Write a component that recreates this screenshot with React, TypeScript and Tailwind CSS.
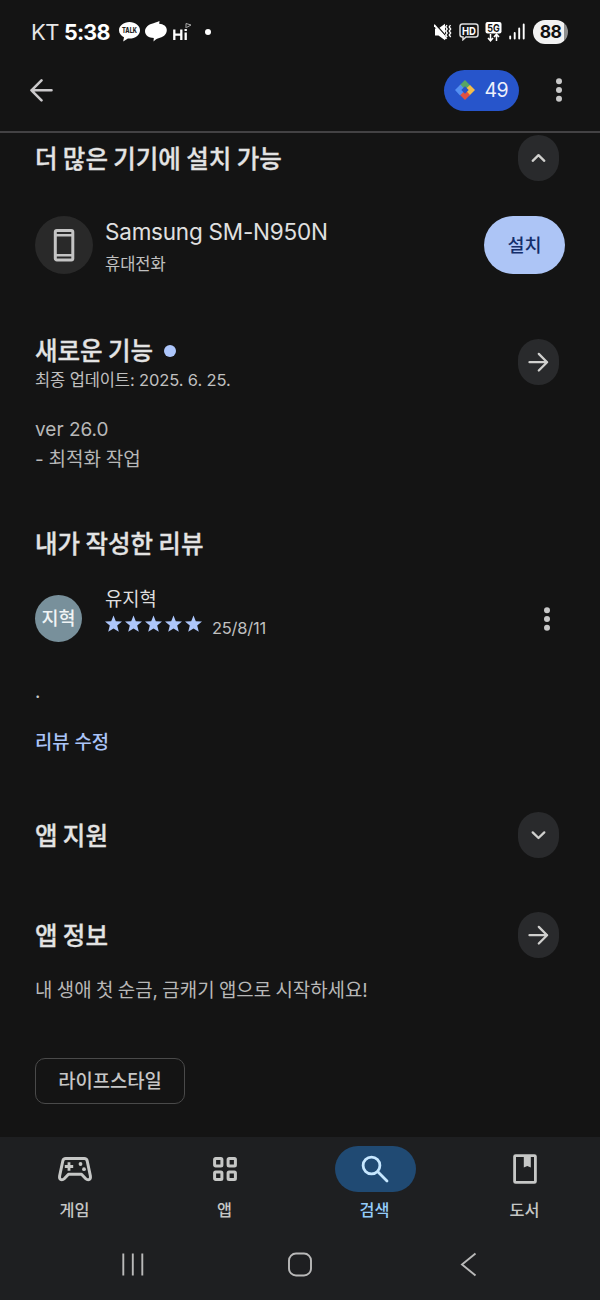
import type { ReactNode } from "react"

function StatusBar() {
  return (
    <div className="flex h-[62px] items-center justify-between pl-[31px] pr-[32px] pt-px text-white">
      <div className="flex items-center">
        <span className="w-[33px] text-[22px] leading-7 tracking-[-0.5px] text-[#e6e6e6]">KT</span>
        <span className="w-[55px] text-[21.5px] font-bold leading-7 tracking-[-0.8px]">5:38</span>
        <svg width="21" height="20" viewBox="0 0 21 20">
          <path d="M10.5 0C4.700 0 0 3.700 0 8.300c0 3 2 5.600 5 7L4.200 19.500l4.700-3 1.600.1C16.300 16.600 21 12.900 21 8.300S16.300 0 10.500 0z" fill="#fff" />
          <text x="10.5" y="10.800" textAnchor="middle" fontSize="7" fontWeight="800" textLength="15" lengthAdjust="spacingAndGlyphs" fill="#222">TALK</text>
        </svg>
        <svg className="ml-[5px]" width="22" height="21" viewBox="0 0 22 21">
          <path d="M8.500 2.200C11.500 1.200 13 .8 14.500 0l-.3 2.700c4.300.3 7.600 2.600 7.600 6.300 0 4.800-4.300 7.600-8.300 8.200-2 .6-3.500 1.800-5 3.200l.3-3.400C4 16.800 0 14.600 0 10.300c0-4.300 4-7.200 8.500-8.100z" fill="#fff" />
        </svg>
        <svg className="ml-[6px]" width="20" height="20" viewBox="0 0 20 20">
          <path d="M1.300 7.500v10.500M8.300 7.500v10.500M1.300 12.600h7M12.700 10.500v7.500M12.700 7v2" fill="none" stroke="#fff" strokeWidth="2.300" />
          <path d="M13 6V1.500l5 1.500-4.500 2.500" fill="none" stroke="#aaa" strokeWidth="1" />
        </svg>
        <span className="ml-[12px] size-[6px] rounded-full bg-white" />
      </div>
      <div className="flex items-center">
        <svg width="18" height="18" viewBox="0 0 18 18">
          <path d="M1 5.500h3.500L11 .8v16.400l-6.500-4.700H1z" fill="#fff" />
          <path d="M1 .8 13 14.300" stroke="#141414" strokeWidth="1.300" />
          <path d="M0 1.800 12.500 15.800" stroke="#fff" strokeWidth="2" />
          <path d="m13 2 -1.300 2 1.500 2-1.500 2 1.500 2-1.500 2 1.500 2M16.500 2l-1.300 2 1.500 2-1.500 2 1.500 2-1.500 2 1.500 2" fill="none" stroke="#fff" strokeWidth="1.300" />
        </svg>
        <svg className="ml-[7px]" width="20" height="18" viewBox="0 0 20 18">
          <path d="M3.500 1h13Q19 1 19 3.500v8q0 2.500-2.500 2.500H7l-3 2.700V14h-.5Q1 14 1 11.500v-8Q1 1 3.500 1z" fill="none" stroke="#ddd" strokeWidth="1.500" />
          <text x="10" y="11.600" textAnchor="middle" fontSize="11" fontWeight="700" textLength="14" lengthAdjust="spacingAndGlyphs" fill="#fff">HD</text>
        </svg>
        <svg className="ml-[6px]" width="17" height="20" viewBox="0 0 17 20">
          <rect x=".5" y="0" width="16" height="11.500" rx="2" fill="#fff" />
          <text x="8.500" y="9.500" textAnchor="middle" fontSize="10.500" fontWeight="700" textLength="12.500" lengthAdjust="spacingAndGlyphs" fill="#141414">5G</text>
          <path d="M5.500 12v6.500M3 16l2.500 2.800L8 16M11.500 19v-6.500M9 15l2.500-2.800L14 15" fill="none" stroke="#fff" strokeWidth="1.500" />
        </svg>
        <svg className="ml-[7px]" width="16" height="17" viewBox="0 0 16 17">
          <path d="M1.200 13.500V15.500M5.700 10v5.500M10.200 5.500v10M14.700 1.500v14" fill="none" stroke="#fff" strokeWidth="1.900" strokeLinecap="round" />
        </svg>
        <span className="ml-[8px] flex h-[24px] w-[35px] items-center justify-center rounded-full bg-linear-to-r from-[#f2f2f2] from-88% to-[#909090] to-88% text-[17.500px] font-bold leading-6 tracking-[-0.6px] text-[#111]">
          88
        </span>
      </div>
    </div>
  )
}

function DotsIcon() {
  return (
    <svg width="8" height="24" viewBox="0 0 8 24" fill="#c8c8c8">
      <circle cx="4" cy="3.200" r="3" />
      <circle cx="4" cy="12" r="3" />
      <circle cx="4" cy="20.800" r="3" />
    </svg>
  )
}

function PointsIcon() {
  return (
    <svg width="20" height="22" viewBox="0 0 20 22">
      <path d="M10 1 15.500 6.700 10 11.500 4.500 6.500z" fill="#57a564" />
      <path d="M15 6 20 11l-5.500 5.500L9.500 11z" fill="#f4bd49" />
      <path d="M10 21 4.500 15.500 10 10.500l5 5.500z" fill="#e2513f" />
      <path d="M0 11 5.500 5.500 10.500 11 5 16.500z" fill="#5490f3" />
      <path d="M10 7.300 13.700 11 10 14.700 6.300 11z" fill="#2853c7" />
    </svg>
  )
}

function AppBar() {
  return (
    <header className="flex h-[71px] items-center border-b-2 border-[#434244] pb-[13px] pl-[29px] pr-[37px]">
      <svg width="24" height="24" viewBox="0 0 24 24" fill="none" stroke="#cbc9cb" strokeWidth="2.600" strokeLinecap="round" strokeLinejoin="round">
        <path d="M22.500 12.300H2.500M12.500 2.300l-10 10 10 10" />
      </svg>
      <div className="ml-auto flex h-[41px] w-[75px] items-center rounded-full bg-[#2755cb] pl-[10.500px]">
        <PointsIcon />
        <span className="ml-[10px] text-[19.500px] leading-6 tracking-[-0.5px] text-[#eef1fb]">49</span>
      </div>
      <div className="ml-[36px]">
        <DotsIcon />
      </div>
    </header>
  )
}

function RoundButton({ icon }: { icon: "up" | "down" | "right" }) {
  return (
    <button className="flex h-[46px] w-[41px] shrink-0 items-center justify-center rounded-full bg-[#292a2c]">
      <svg width="22" height="22" viewBox="0 0 22 22" fill="none" stroke="#d0d0ce" strokeWidth="2.300" strokeLinecap="round" strokeLinejoin="round">
        {icon === "up" && <path d="M4.700 13.800 10.500 8.200l5.800 5.600" />}
        {icon === "down" && <path d="M4.700 8.400 10.500 14l5.800-5.600" />}
        {icon === "right" && <path d="M1.500 11.200h17.600M10.800 2.900l8.300 8.300-8.300 8.300" />}
      </svg>
    </button>
  )
}

function Heading({ children }: { children: ReactNode }) {
  return (
    <h2 className="pt-px text-[24.500px] font-medium leading-[30px] text-[#e3e3e3] [-webkit-text-stroke:0.3px_#e3e3e3] [word-spacing:-1.200px]">
      {children}
    </h2>
  )
}

function Stars() {
  return (
    <div className="flex gap-[2px] pb-[7px]">
      {[0, 1, 2, 3, 4].map((i) => (
        <svg key={i} width="18" height="18" viewBox="0 0 18 18">
          <path d="M8.500 .5l2.300 5.700 6.200.4-4.800 4 1.600 6.200L8.500 13.500l-5.300 3.300 1.600-6.200L0 6.600l6.200-.4z" fill="#adc6fb" />
        </svg>
      ))}
    </div>
  )
}

function NavItem({ label, active, children }: { label: string; active?: boolean; children: ReactNode }) {
  return (
    <div className="flex flex-col items-center">
      <div className={active ? "flex h-[46px] w-[81px] items-center justify-center rounded-full bg-[#204a73]" : "flex h-[46px] w-[81px] items-center justify-center"}>
        {children}
      </div>
      <span className={active ? "mt-[6px] pr-px text-[16.300px] font-medium leading-6 text-[#94ccfa]" : "mt-[6px] pr-px text-[16.300px] font-medium leading-6 text-[#c6c7c6]"}>
        {label}
      </span>
    </div>
  )
}

function BottomNav() {
  return (
    <nav className="grid h-[93px] grid-cols-4 pt-[9px]">
      <NavItem label="게임">
        <svg width="36" height="26" viewBox="0 0 36 26">
          <path d="M8.800 2.500h18.400q2.500 0 3 2.500l3.200 15q.5 3.700-2.200 3.700-1.400 0-2.400-1L24.500 18.200h-13l-4.300 4.500q-1 1-2.400 1-2.700 0-2.200-3.700L5.800 5Q6.300 2.500 8.800 2.500z" fill="none" stroke="#c6c7c6" strokeWidth="3" strokeLinejoin="round" />
          <path d="M12 6.300v8.400M7.800 10.500h8.400" stroke="#c6c7c6" strokeWidth="2.800" />
          <circle cx="23.500" cy="8" r="1.900" fill="#c6c7c6" />
          <circle cx="27" cy="13.200" r="1.900" fill="#c6c7c6" />
        </svg>
      </NavItem>
      <NavItem label="앱">
        <svg width="24" height="24" viewBox="0 0 24 24" fill="none" stroke="#c6c7c6" strokeWidth="3">
          <rect x="1.600" y="1.600" width="7.300" height="7.300" rx="1" />
          <rect x="15.100" y="1.600" width="7.300" height="7.300" rx="1" />
          <rect x="1.600" y="15.100" width="7.300" height="7.300" rx="1" />
          <rect x="15.100" y="15.100" width="7.300" height="7.300" rx="1" />
        </svg>
      </NavItem>
      <NavItem label="검색" active>
        <svg width="28" height="28" viewBox="0 0 28 28" fill="none" stroke="#c6e7ff" strokeWidth="2.800" strokeLinecap="round">
          <circle cx="10.500" cy="10.500" r="8.400" />
          <path d="m16.800 16.800 9.200 9.200" />
        </svg>
      </NavItem>
      <NavItem label="도서">
        <svg width="24" height="30" viewBox="0 0 24 30">
          <rect x="1.600" y="1.600" width="20.800" height="26.800" rx="1" fill="none" stroke="#c6c7c6" strokeWidth="2.800" />
          <path d="M10.800 2h7v11.500l-3.500-1.500-3.500 1.500z" fill="#c6c7c6" />
        </svg>
      </NavItem>
    </nav>
  )
}

function SystemNav() {
  return (
    <div className="flex h-[70px] items-start pl-[121px] pt-[22px]">
      <svg width="24" height="26" viewBox="0 0 24 26" fill="none" stroke="#b9b9b9" strokeWidth="1.900">
        <path d="M2.300 1.500v22M11.800 1.500v22M21.300 1.500v22" />
      </svg>
      <svg className="ml-[142px]" width="26" height="26" viewBox="0 0 26 26" fill="none" stroke="#b9b9b9" strokeWidth="1.900">
        <rect x="2" y="1.500" width="22" height="22" rx="7" />
      </svg>
      <svg className="ml-[146px]" width="18" height="26" viewBox="0 0 18 26" fill="none" stroke="#b9b9b9" strokeWidth="1.900">
        <path d="M16.500 1.500 3 12.500l13.500 11" />
      </svg>
    </div>
  )
}

export default function App() {
  return (
    <div className="flex h-[1300px] w-[600px] flex-col overflow-hidden bg-[#141414] font-[Inter,'Noto_Sans_CJK_KR',sans-serif]">
      <StatusBar />
      <AppBar />
      <main className="flex-1 px-[35px] pt-[2px]">
        <section>
          <div className="flex h-[46px] items-center justify-between pr-[6px]">
            <Heading>더 많은 기기에 설치 가능</Heading>
            <RoundButton icon="up" />
          </div>
          <div className="mt-[35px] flex h-[58px] items-center">
            <div className="flex size-[58px] items-center justify-center rounded-full bg-[#292929]">
              <svg width="22" height="34" viewBox="0 0 22 34" fill="none" stroke="#c4c4c4">
                <rect x="2.300" y="2.500" width="17.500" height="29.500" rx="1.500" strokeWidth="3" />
                <path d="M2 7.200h17.500M2 27.300h17.500" strokeWidth="2.400" />
              </svg>
            </div>
            <div className="ml-[12px] pt-[6px]">
              <p className="text-[22.500px] leading-[32px] tracking-[-0.22px] text-[#e0e0e0]">Samsung SM-N950N</p>
              <p className="text-[16.500px] leading-[32px] text-[#c0c0c0]">휴대전화</p>
            </div>
            <button className="ml-auto h-[58px] w-[81px] rounded-full bg-[#adc5f6] pt-[2px] text-[18.500px] font-medium text-[#142e6b]">설치</button>
          </div>
        </section>

        <section className="mt-[61px]">
          <div className="flex h-[58px] justify-between pr-[6px]">
            <div>
              <div className="flex items-center">
                <Heading>새로운 기능</Heading>
                <span className="ml-[11px] size-[12px] rounded-full bg-[#adc6fb]" />
              </div>
              <p className="text-[16.500px] leading-[28px] tracking-[-0.12px] text-[#c0c0c0]">최종 업데이트: 2025. 6. 25.</p>
            </div>
            <div className="pt-[4px]">
              <RoundButton icon="right" />
            </div>
          </div>
          <p className="mt-[22px] text-[19px] leading-[30px] text-[#b8b8b8]">
            ver 26.0
            <br />
            <span className="[word-spacing:-0.500px]">- 최적화 작업</span>
          </p>
        </section>

        <section className="mt-[53px]">
          <Heading>내가 작성한 리뷰</Heading>
          <div className="mt-[24px] flex h-[60px] items-center pr-[14px]">
            <div className="mt-[10px] flex size-[47px] items-center justify-center rounded-full bg-[#78909b] pt-[2px] text-[18.500px] font-medium text-[#f0f4f5]">지혁</div>
            <div className="ml-[23px] pt-px">
              <p className="text-[18.800px] leading-[28px] text-[#dedede]">유지혁</p>
              <div className="flex h-[28px] items-center">
                <Stars />
                <span className="ml-[9px] text-[16.500px] leading-6 tracking-[-0.250px] text-[#c0c0c0]">25/8/11</span>
              </div>
            </div>
            <div className="ml-auto mt-[11px]">
              <DotsIcon />
            </div>
          </div>
          <p className="mt-[35px] text-[18.800px] leading-[28px] text-[#c8c8c8]">.</p>
          <p className="mt-[23px] text-[18.800px] font-medium leading-[28px] text-[#abc4f8]">리뷰 수정</p>
        </section>

        <section className="mt-[55px] flex h-[46px] items-center justify-between pr-[6px]">
          <Heading>앱 지원</Heading>
          <RoundButton icon="down" />
        </section>

        <section className="mt-[54px]">
          <div className="flex h-[46px] items-center justify-between pr-[6px]">
            <Heading>앱 정보</Heading>
            <RoundButton icon="right" />
          </div>
          <p className="mt-[19px] text-[18.900px] leading-[28px] text-[#b8b8b8] [word-spacing:-0.900px]">내 생애 첫 순금, 금캐기 앱으로 시작하세요!</p>
          <button className="mt-[53px] flex h-[46px] w-[150px] items-center justify-center rounded-[10px] border-[1.500px] border-[#4a4a4a] pt-[3px] text-[18.800px] font-medium text-[#c6c6c6]">
            라이프스타일
          </button>
        </section>
      </main>
      <footer className="bg-[#1e1f21]">
        <BottomNav />
        <SystemNav />
      </footer>
    </div>
  )
}
